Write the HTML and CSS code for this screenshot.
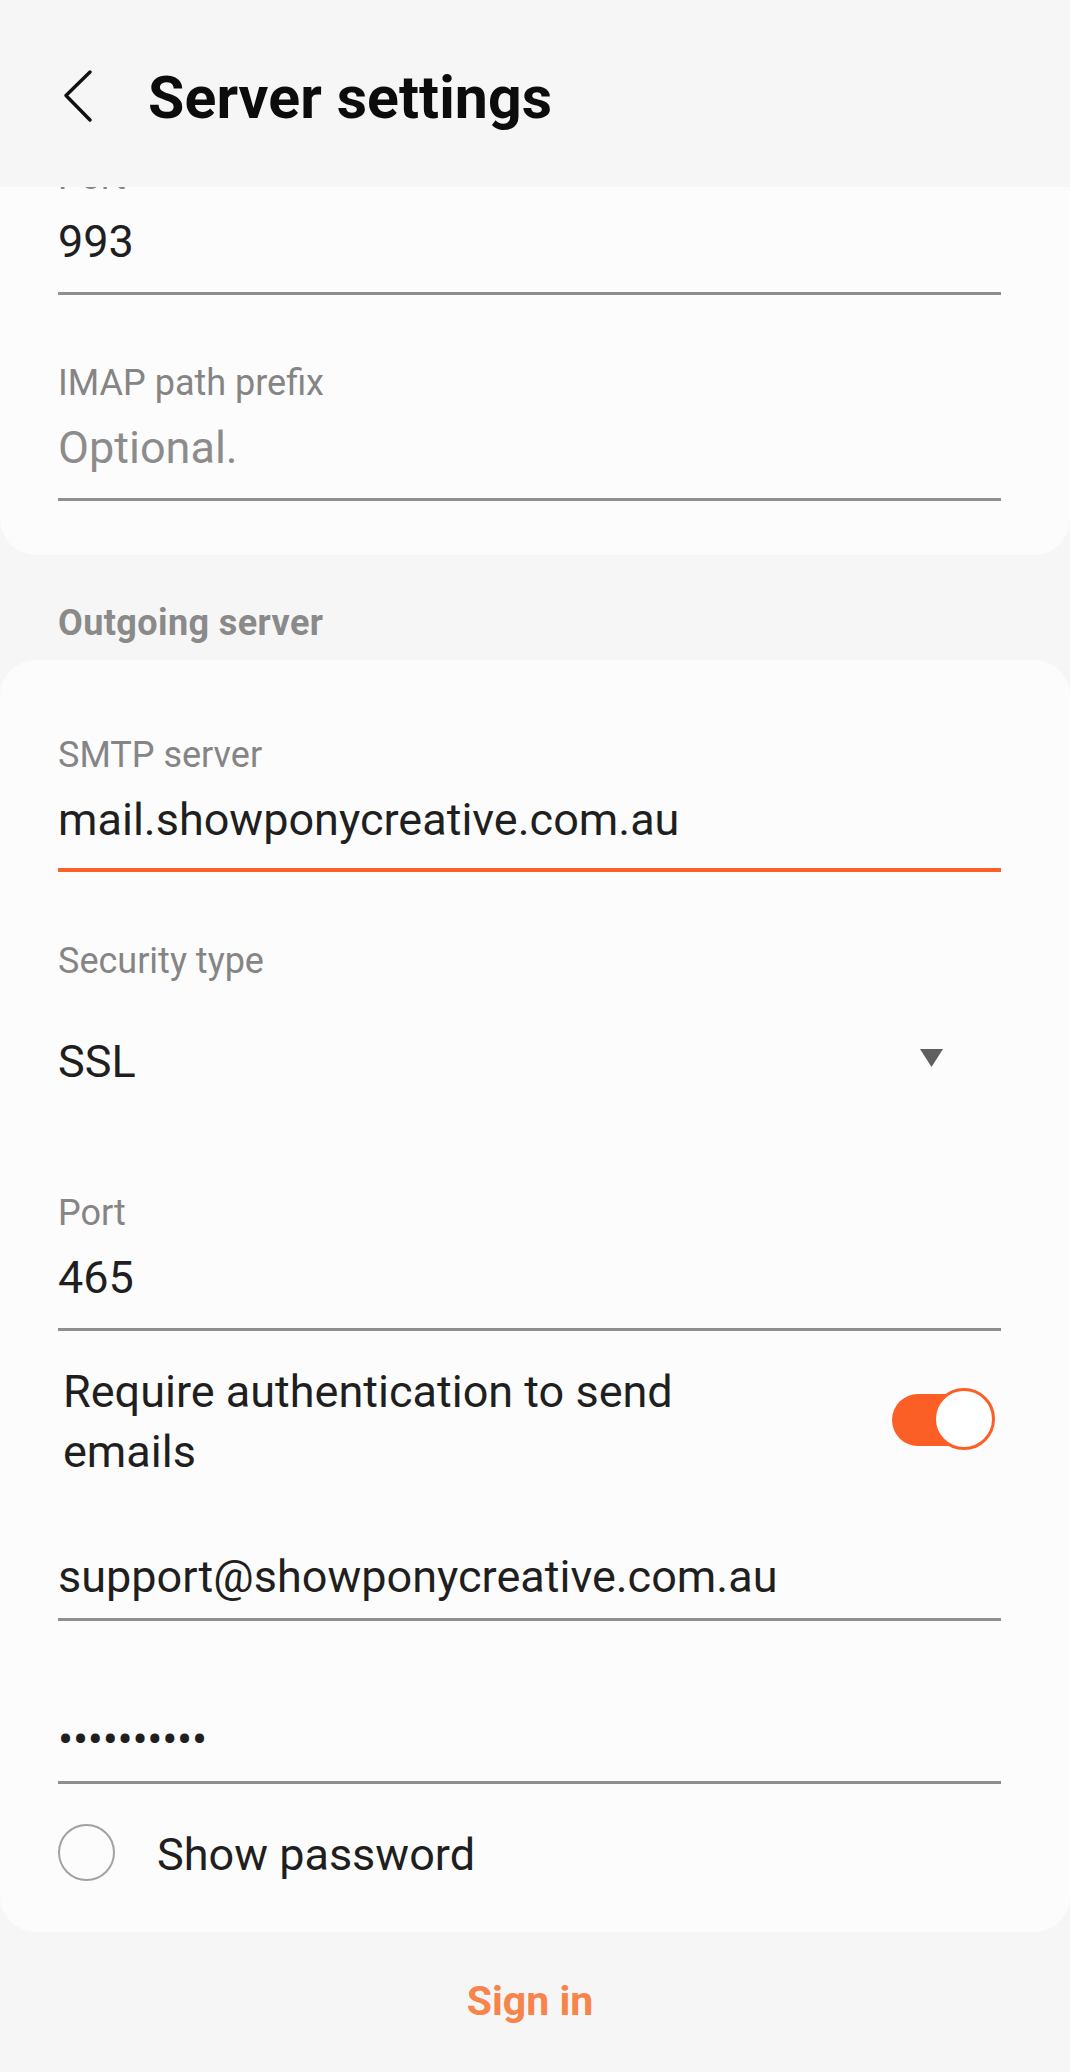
FILE: index.html
```html
<!DOCTYPE html>
<html lang="en">
<head>
<meta charset="utf-8">
<title>Server settings</title>
<link rel="stylesheet" href="styles.css">
</head>
<body>
<div class="screen">
  <header class="appbar">
    <svg class="back" width="32" height="56" viewBox="0 0 32 56" aria-hidden="true">
      <path d="M28 2 L4 25.5 L28 50" fill="none" stroke="#111" stroke-width="3.4" stroke-linecap="round" stroke-linejoin="round"/>
    </svg>
    <h1 class="title">Server settings</h1>
  </header>

  <section class="card card-first">
    <div class="field field-peek">
      <div class="label">Port</div>
      <div class="value">993</div>
    </div>
    <div class="field field-gap">
      <div class="label">IMAP path prefix</div>
      <div class="value hint">Optional.</div>
    </div>
  </section>

  <h2 class="section-title">Outgoing server</h2>

  <section class="card card-second">
    <div class="field">
      <div class="label">SMTP server</div>
      <div class="value focused">mail.showponycreative.com.au</div>
    </div>

    <div class="select-field">
      <div class="label">Security type</div>
      <div class="select-row">
        <span class="select-value">SSL</span>
        <svg class="caret" width="23" height="18" viewBox="0 0 23 18" aria-hidden="true">
          <path d="M0 0 H23 L11.5 18 Z" fill="#5f5f5f"/>
        </svg>
      </div>
    </div>

    <div class="field field-port">
      <div class="label">Port</div>
      <div class="value">465</div>
    </div>

    <div class="switch-row">
      <div class="switch-text">Require authentication to send emails</div>
      <div class="switch">
        <span class="switch-track"></span>
        <span class="switch-thumb"></span>
      </div>
    </div>

    <div class="value plain email">support@showponycreative.com.au</div>
    <div class="value plain password">••••••••••</div>

    <div class="check-row">
      <span class="radio"></span>
      <span class="check-text">Show password</span>
    </div>
  </section>

  <div class="signin">Sign in</div>
</div>
</body>
</html>
```

FILE: styles.css
```css
html {
  background: #f6f6f6;
}

body {
  margin: 0;
  background: #f6f6f6;
  font-family: Roboto, "Noto Sans", "Liberation Sans", sans-serif;
  color: #1f1f1f;
}

.screen {
  width: 1070px;
  min-height: 2072px;
  display: flex;
  flex-direction: column;
}

.appbar {
  box-sizing: border-box;
  height: 187px;
  padding-top: 9px;
  display: flex;
  align-items: center;
  background: #f6f6f6;
  position: relative;
  z-index: 2;
}

.back {
  margin-left: 62px;
  flex: none;
}

.title {
  margin: 0 0 0 54px;
  font-size: 59px;
  line-height: 58px;
  font-weight: 700;
  color: #0c0c0c;
  letter-spacing: 0.1px;
}

.card {
  background: #fcfcfc;
  padding: 0 69px 0 58px;
  overflow: hidden;
}

.card-first {
  border-radius: 0 0 36px 36px;
  padding-bottom: 54px;
}

.card-second {
  border-radius: 36px;
  padding-top: 77px;
  padding-bottom: 51px;
}

.label {
  font-size: 36px;
  line-height: 36px;
  color: #858585;
}

.value {
  margin-top: 21px;
  font-size: 45px;
  line-height: 52px;
  padding-bottom: 24px;
  border-bottom: 3px solid #8f8f8f;
  color: #1f1f1f;
  white-space: nowrap;
}

.value.hint {
  color: #8c8c8c;
}

.value.focused {
  padding-bottom: 22px;
  border-bottom: 4px solid #fc6127;
}

.field-peek .label {
  margin-top: -28px;
}

.field-gap {
  margin-top: 70px;
}

.section-title {
  margin: 50px 0 19px 58px;
  font-size: 36px;
  line-height: 36px;
  font-weight: 700;
  color: #8a8a8a;
  letter-spacing: 0.4px;
}

.select-field {
  margin-top: 71px;
}

.select-row {
  margin-top: 57px;
  display: flex;
  justify-content: space-between;
  align-items: flex-start;
}

.select-value {
  font-size: 45px;
  line-height: 52px;
  color: #1f1f1f;
}

.caret {
  margin-top: 13px;
  margin-right: 58px;
  flex: none;
}

.field-port {
  margin-top: 107px;
}

.switch-row {
  margin-top: 31px;
  padding-left: 5px;
  display: flex;
  align-items: flex-start;
  justify-content: space-between;
}

.switch-text {
  max-width: 690px;
  font-size: 45px;
  line-height: 60px;
  color: #1f1f1f;
}

.switch {
  position: relative;
  flex: none;
  width: 103px;
  height: 62px;
  margin-top: 26px;
  margin-right: 6px;
}

.switch-track {
  position: absolute;
  left: 0;
  top: 6px;
  width: 84px;
  height: 52px;
  border-radius: 26px;
  background: #fc5f26;
}

.switch-thumb {
  position: absolute;
  right: 0;
  top: 0;
  box-sizing: border-box;
  width: 62px;
  height: 62px;
  border-radius: 50%;
  background: #fff;
  border: 3px solid #fc5f26;
}

.value.plain {
  margin-top: 0;
  padding-bottom: 15px;
}

.email {
  margin-top: 69px !important;
}

.password {
  margin-top: 93px !important;
  letter-spacing: -0.3px;
}

.check-row {
  margin-top: 40px;
  display: flex;
  align-items: flex-start;
}

.radio {
  box-sizing: border-box;
  width: 57px;
  height: 57px;
  border-radius: 50%;
  border: 2.5px solid #a2a2a2;
  flex: none;
}

.check-text {
  margin: 5px 0 0 42px;
  font-size: 45px;
  line-height: 52px;
  color: #1f1f1f;
}

.signin {
  margin-top: 45px;
  text-align: center;
  font-size: 41px;
  line-height: 48px;
  font-weight: 700;
  color: #f7844a;
  padding-right: 10px;
}
```
